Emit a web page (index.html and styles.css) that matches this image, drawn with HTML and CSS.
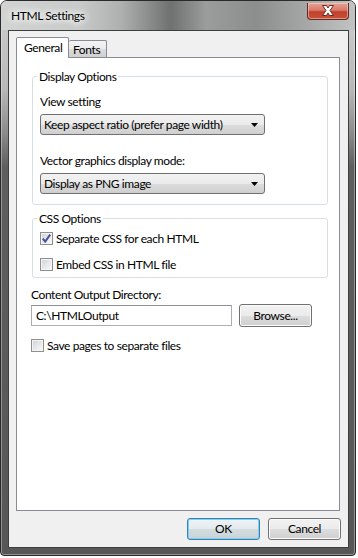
FILE: index.html
```html
<!DOCTYPE html>
<html lang="en">
<head>
    <meta charset="UTF-8">
    <title>HTML Settings</title>
    <link rel="stylesheet" href="styles.css">
</head>
<body>

<div class="window">
    <div class="titlebar">
        <span class="title">HTML Settings</span>
        <div class="close">
            <svg width="42" height="17" viewBox="0 0 42 17">
                <path d="M15.5 3.5 L19.5 3.5 L21 6 L22.5 3.5 L26.5 3.5 L23 8.5 L26.5 13.5 L22.5 13.5 L21 11 L19.5 13.5 L15.5 13.5 L19 8.5 Z" fill="#fff" stroke="#6a2c22" stroke-width="1"/>
            </svg>
        </div>
    </div>

    <div class="client">
        <div class="tabs">
            <div class="tab active">General</div>
            <div class="tab">Fonts</div>
        </div>

        <div class="panel">
            <fieldset class="group">
                <legend>Display Options</legend>
                <div class="label first">View setting</div>
                <div class="combo">
                    <span>Keep aspect ratio (prefer page width)</span>
                    <svg width="7" height="4" viewBox="0 0 7 4"><path d="M0 0 L7 0 L3.5 4 Z" fill="#000"/></svg>
                </div>
                <div class="label">Vector graphics display mode:</div>
                <div class="combo">
                    <span>Display as PNG image</span>
                    <svg width="7" height="4" viewBox="0 0 7 4"><path d="M0 0 L7 0 L3.5 4 Z" fill="#000"/></svg>
                </div>
            </fieldset>

            <fieldset class="group css-group">
                <legend>CSS Options</legend>
                <div class="check-row first">
                    <span class="check">
                        <svg width="11" height="11" viewBox="0 0 11 11"><path d="M1.8 5.6 L4.2 8.6 L9.2 1.6" fill="none" stroke="#42569a" stroke-width="2"/></svg>
                    </span>
                    Separate CSS for each HTML
                </div>
                <div class="check-row">
                    <span class="check"></span>
                    Embed CSS in HTML file
                </div>
            </fieldset>

            <div class="label dir-label">Content Output Directory:</div>
            <div class="dir-row">
                <div class="textbox">C:\HTMLOutput</div>
                <div class="btn">Browse...</div>
            </div>

            <div class="check-row save-row">
                <span class="check"></span>
                Save pages to separate files
            </div>
        </div>

        <div class="footer">
            <div class="btn default">OK</div>
            <div class="btn">Cancel</div>
        </div>
    </div>
</div>

</body>
</html>
```

FILE: styles.css
```css
* {
    box-sizing: border-box;
}

body {
    margin: 0;
    background: #fff;
    font-family: "Lato", "Liberation Sans", sans-serif;
    font-size: 12px;
    letter-spacing: -0.4px;
    color: #000;
}

.window {
    width: 356px;
    height: 556px;
    display: flex;
    flex-direction: column;
    border: 1px solid #2a2a2a;
    border-radius: 7px 7px 4px 4px;
    padding: 0 6px 7px 7px;
    background: linear-gradient(180deg, #cfcfcf 0%, #b8b8b8 16%, #8a8a8a 24%, #5e5e5e 30%, #575757 100%);
    box-shadow: inset 0 0 0 1px rgba(255, 255, 255, 0.35);
    overflow: hidden;
}

/* title bar */
.titlebar {
    height: 29px;
    margin: 0 -6px 0 -7px;
    padding-left: 10px;
    display: flex;
    align-items: flex-start;
    background: linear-gradient(90deg, #d2d3d3 0%, #c9caca 22%, #aeafaf 34%, #6f7070 48%, #9b9c9c 58%, #8c8d8d 72%, #a9aaaa 88%, #c2c3c3 100%);
}

.title {
    margin-top: 7px;
    line-height: 15px;
    color: #000;
    text-shadow: 0 0 6px #fff, 0 0 8px #fff, 0 0 10px #fff;
}

.close {
    margin: 2px 6px 0 auto;
    width: 42px;
    height: 17px;
    border: 1px solid #5e2a22;
    border-top: none;
    border-radius: 0 0 4px 4px;
    background: linear-gradient(180deg, #e6a396 0%, #d9796a 45%, #c2422b 55%, #c95037 100%);
    box-shadow: inset 0 0 0 1px rgba(255, 220, 210, 0.5);
}

.close svg {
    display: block;
    margin: -1px 0 0 -1px;
}

/* client area */
.client {
    flex: 1;
    display: flex;
    flex-direction: column;
    background: #f0f0f0;
    border: 1px solid #3e3e3e;
    padding: 6px 8px 7px 7px;
}

.tabs {
    height: 20px;
    display: flex;
    align-items: flex-end;
}

.tab {
    width: 38px;
    height: 17px;
    padding-left: 4px;
    border: 1px solid #898c95;
    border-bottom: none;
    border-left: none;
    border-radius: 2px 2px 0 0;
    line-height: 17px;
    background: linear-gradient(180deg, #f3f3f3 0%, #ebebeb 50%, #dddddd 51%, #cfcfcf 100%);
}

.tab.active {
    width: 53px;
    height: 21px;
    margin-bottom: -1px;
    padding-left: 7px;
    border-left: 1px solid #898c95;
    background: #fff;
    line-height: 19px;
    position: relative;
    z-index: 1;
}

.panel {
    flex: 1;
    background: #fff;
    border: 1px solid #898c95;
    padding: 0 11px 0 14px;
}

/* group boxes */
.group {
    margin: 11px 0 0 1px;
    padding: 0 7px 10px 7px;
    border: 1px solid #d5dfe5;
    border-radius: 3px;
}

.group legend {
    padding: 0 2px;
    margin-left: -3px;
    line-height: 15px;
}

.css-group {
    margin-top: 6px;
    padding-bottom: 5px;
}

.label {
    line-height: 15px;
    margin-top: 18px;
}

.label.first {
    margin-top: 10px;
}

.combo {
    margin-top: 5px;
    width: 225px;
    height: 21px;
    display: flex;
    align-items: center;
    justify-content: space-between;
    padding: 0 6px 0 3px;
    border: 1px solid #707070;
    border-radius: 3px;
    background: linear-gradient(180deg, #f2f2f2 0%, #ebebeb 50%, #dddddd 51%, #cfcfcf 100%);
}

.check-row {
    display: flex;
    align-items: center;
    gap: 3px;
    line-height: 15px;
    margin-top: 11px;
}

.check-row.first {
    margin-top: 5px;
}

.check {
    width: 13px;
    height: 13px;
    border: 1px solid #8e8f8f;
    background: linear-gradient(135deg, #cfd2d6 0%, #e6e7e9 50%, #fbfbfb 100%);
    box-shadow: inset 0 0 0 1px #f4f4f4;
    display: flex;
    align-items: center;
    justify-content: center;
}

.check svg {
    display: block;
}

.dir-label {
    margin-top: 9px;
}

.dir-row {
    margin-top: 2px;
    display: flex;
    align-items: center;
    gap: 7px;
}

.textbox {
    width: 201px;
    height: 21px;
    padding-left: 4px;
    line-height: 19px;
    border: 1px solid #abadb3;
    border-top-color: #8e9196;
    background: #fff;
}

.btn {
    width: 73px;
    height: 23px;
    line-height: 21px;
    text-align: center;
    border: 1px solid #707070;
    border-radius: 3px;
    background: linear-gradient(180deg, #f2f2f2 0%, #ebebeb 50%, #dddddd 51%, #cfcfcf 100%);
    box-shadow: inset 0 0 0 1px #fcfcfc;
}

.save-row {
    margin-top: 11px;
}

/* bottom buttons */
.footer {
    margin: 7px -1px 0 0;
    display: flex;
    justify-content: flex-end;
    gap: 8px;
}

.footer .btn {
    height: 22px;
    line-height: 20px;
}

.btn.default {
    border-color: #3c7fb1;
    background: linear-gradient(180deg, #eef3f5 0%, #e3eaed 50%, #d3dde1 51%, #c8d3d8 100%);
    box-shadow: inset 0 0 0 1px #7fd0f0;
}
```
